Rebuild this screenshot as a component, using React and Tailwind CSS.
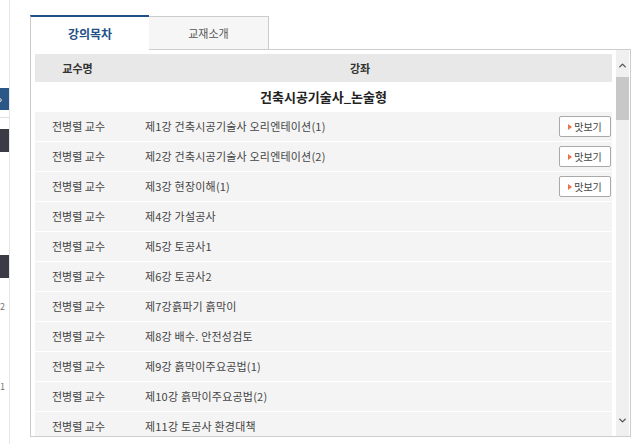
import { ChevronUp, ChevronDown } from "lucide-react";

const lectures = [
  { title: "제1강 건축시공기술사 오리엔테이션(1)", preview: true },
  { title: "제2강 건축시공기술사 오리엔테이션(2)", preview: true },
  { title: "제3강 현장이해(1)", preview: true },
  { title: "제4강 가설공사" },
  { title: "제5강 토공사1" },
  { title: "제6강 토공사2" },
  { title: "제7강흙파기 흙막이" },
  { title: "제8강 배수. 안전성검토" },
  { title: "제9강 흙막이주요공법(1)" },
  { title: "제10강 흙막이주요공법(2)" },
  { title: "제11강 토공사 환경대책" },
];

const font = { fontFamily: '"Noto Sans CJK KR", "Noto Sans", sans-serif' };

function SideStrip() {
  return (
    <div className="w-[10px] shrink-0 border-r border-[#e6e6e6] h-[444px] overflow-hidden flex flex-col">
      <div className="h-[88px]" />
      <div className="h-[22px] w-[9px] bg-[#2b5688] flex items-center">
        <span className="text-white text-[10px] leading-none -ml-[1px]">›</span>
      </div>
      <div className="h-[8px] border-b border-[#e0e0e0]" />
      <div className="h-[11px]" />
      <div className="h-[23px] w-[9px] bg-[#3b3b46]" />
      <div className="h-[103px]" />
      <div className="h-[23px] w-[9px] bg-[#3b3b46]" />
      <div className="h-[24px]" />
      <div className="text-[9px] text-[#777] leading-none">2</div>
      <div className="h-[71px]" />
      <div className="text-[9px] text-[#777] leading-none">1</div>
    </div>
  );
}

function PreviewButton() {
  return (
    <button className="w-[52px] h-[21px] border border-[#a9a9a9] rounded-[2px] bg-white flex items-center justify-center gap-[2px] text-[10px] text-[#444] leading-none">
      <span className="w-0 h-0 border-y-[3px] border-y-transparent border-l-[4px] border-l-[#e8734a]" />
      맛보기
    </button>
  );
}

export default function App() {
  return (
    <div className="w-[635px] h-[444px] bg-white flex overflow-hidden" style={font}>
      <SideStrip />
      <div className="pl-[20px] pt-[15px]">
        <div className="flex h-[35px] w-[601px] border-b border-[#cccccc]">
          <div className="w-[119px] h-[36px] bg-white border-t-2 border-t-[#1f4f86] border-l border-l-[#cccccc] flex items-center justify-center text-[12px] font-bold text-[#1f4f86]">
            강의목차
          </div>
          <div className="w-[120px] mt-[1px] bg-[#f6f6f6] border-t border-r border-[#cccccc] flex items-center justify-center text-[11px] text-[#555]">
            교재소개
          </div>
        </div>
        <div className="w-[601px] h-[387px] border-x border-b border-[#cccccc] flex">
          <div className="ml-[4px] w-[577px] pt-[4px] overflow-hidden">
            <div className="flex h-[28px] bg-[#e8e8e8] items-center text-[11px] font-bold text-[#333]">
              <div className="w-[85px] text-center">교수명</div>
              <div className="w-[480px] text-center">강좌</div>
            </div>
            <div className="h-[30px] flex items-center justify-center text-[13px] font-bold text-[#222]">
              건축시공기술사_논술형
            </div>
            {lectures.map((lec) => (
              <div
                key={lec.title}
                className="h-[30px] flex items-center bg-[#f4f4f4] border-b border-white text-[11px] text-[#444] tracking-[0.2px]"
              >
                <div className="w-[85px] pl-[17px] tracking-normal">전병렬 교수</div>
                <div className="flex-1 pl-[25px]">{lec.title}</div>
                {lec.preview && (
                  <div className="pr-[1px] tracking-normal">
                    <PreviewButton />
                  </div>
                )}
              </div>
            ))}
          </div>
          <div className="ml-[4px] w-[13px] bg-[#f0f0f0] flex flex-col">
            <div className="h-[27px] flex items-end justify-center pb-[6px]">
              <ChevronUp className="w-[11px] h-[11px] text-[#555]" strokeWidth={3} />
            </div>
            <div className="h-[43px] bg-[#c8c8c8]" />
            <div className="flex-1" />
            <div className="h-[27px] flex items-start justify-center pt-[6px]">
              <ChevronDown className="w-[11px] h-[11px] text-[#555]" strokeWidth={3} />
            </div>
          </div>
        </div>
      </div>
    </div>
  );
}
